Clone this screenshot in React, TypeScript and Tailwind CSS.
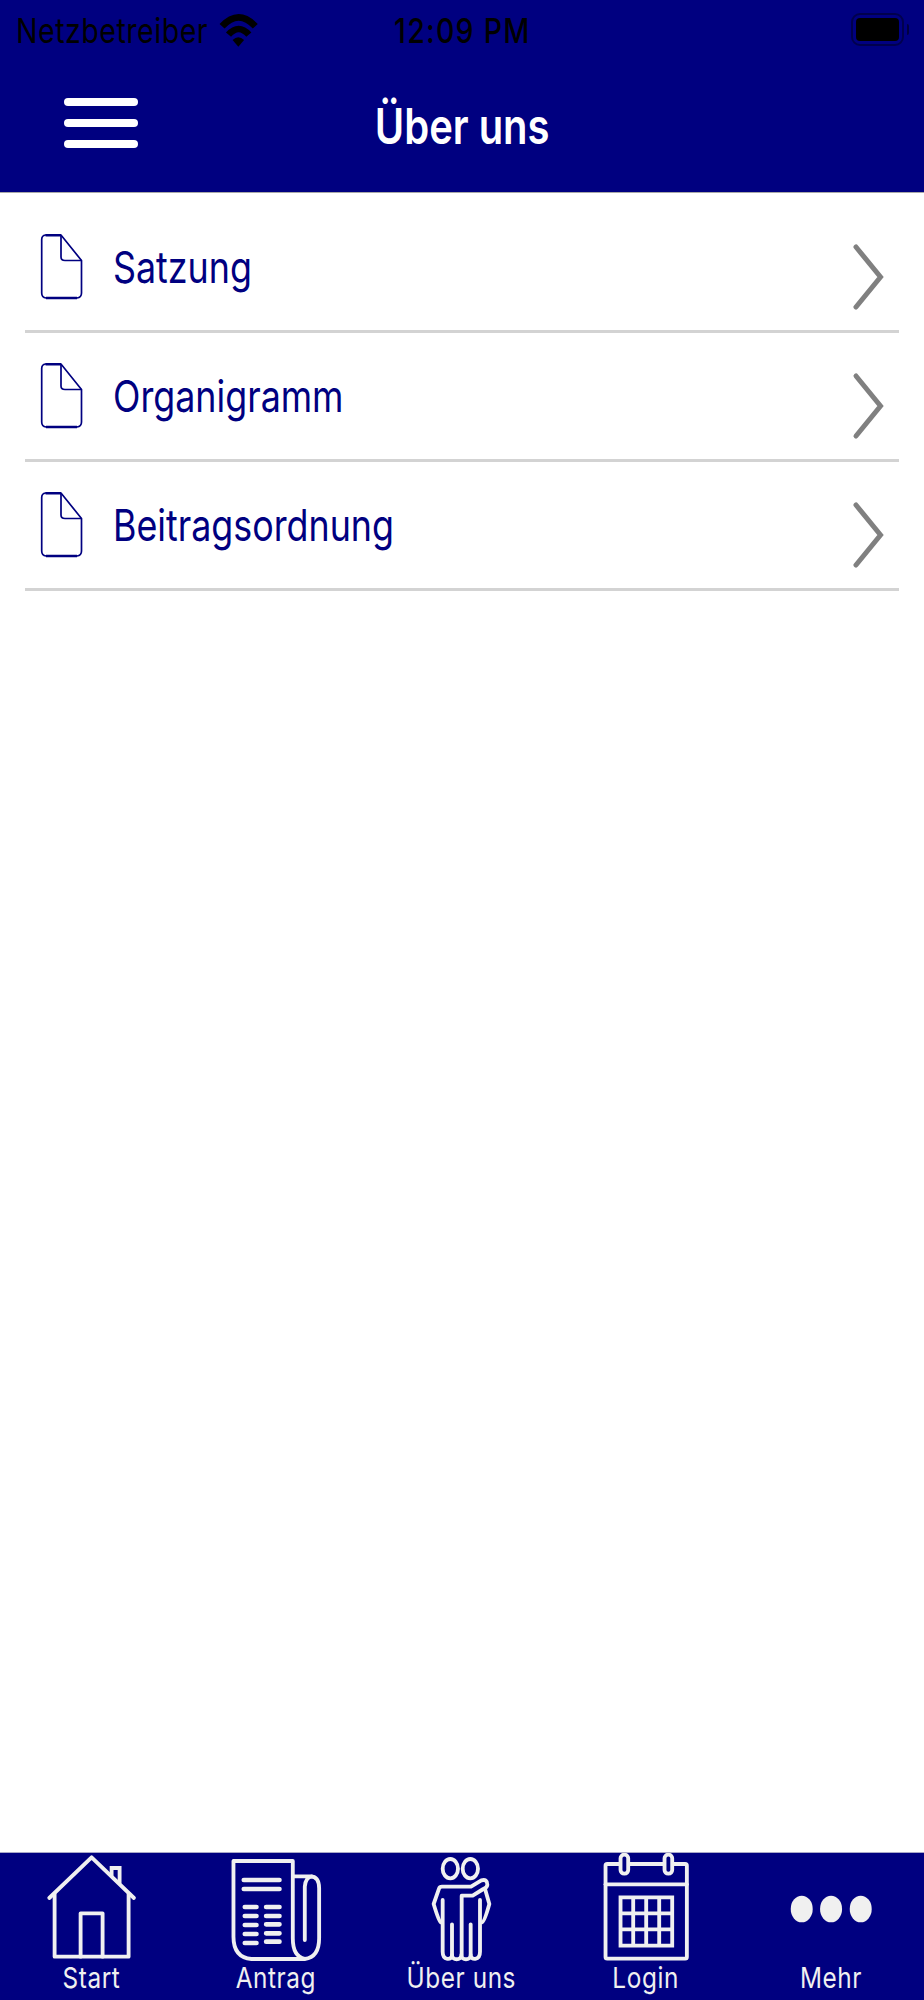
import type { ReactNode } from 'react'

const documents = ['Satzung', 'Organigramm', 'Beitragsordnung']

const tabs: { label: string; viewBox: string; icon: ReactNode }[] = [
  {
    label: 'Start',
    viewBox: '133.2 39 288 336',
    icon: (
      <>
        <path d="M149 174 276 52 403 174" />
        <path d="M165 162V350H387V162" />
        <path d="M243 350V220H309V350" />
        <path strokeLinejoin="miter" d="M336 106V84H360V128" />
      </>
    ),
  },
  {
    label: 'Antrag',
    viewBox: '117.6 39 288 336',
    icon: (
      <>
        <path d="M345 357H185Q131 352 131 290V63H309V295Q309 350 345 357Q388 352 388 295V145Q388 109 362 109H309" />
        <path d="M345 300V140Q347 112 366 109" />
        <path
          strokeWidth="14"
          d="M162 120H269M162 147H269M165 201H200M165 228H200M165 255H200M165 282H200M165 309H200M229 201H269M229 228H269M229 253H269M229 280H269M229 305H269"
        />
      </>
    ),
  },
  {
    label: 'Über uns',
    viewBox: '102 39 288 336',
    icon: (
      <>
        <ellipse cx="211" cy="86" rx="23" ry="29" />
        <ellipse cx="271" cy="86" rx="23" ry="29" />
        <path d="M182 247Q177 246 161 192L177 146Q179 140 186 140H273L304 121Q322 116 322 134Q322 142 310 147L278 167H245V345" />
        <path d="M316 150 328 192Q313 246 306 247" />
        <path d="M188 180V335C188 362 216 362 216 345C216 362 244 362 244 345C244 362 272 362 272 345C272 362 300 362 300 335V180" />
        <path d="M216 253V345M272 253V345" />
      </>
    ),
  },
  {
    label: 'Login',
    viewBox: '116.4 39 288 336',
    icon: (
      <>
        <rect x="136" y="72" width="244" height="284" rx="5" />
        <path d="M136 133H380" />
        <rect x="181" y="44" width="23" height="57" rx="11" fill="#000080" />
        <rect x="313" y="44" width="23" height="57" rx="11" fill="#000080" />
        <path strokeLinejoin="miter" d="M181 172H336V317H181ZM219 172V317M258 172V317M297 172V317M181 220H336M181 268H336" />
      </>
    ),
  },
  {
    label: 'Mehr',
    viewBox: '130.8 39 288 336',
    icon: (
      <g fill="#f0f0f0" stroke="none">
        <ellipse cx="184" cy="207" rx="33" ry="40" />
        <ellipse cx="272" cy="207" rx="33" ry="40" />
        <ellipse cx="361" cy="207" rx="33" ry="40" />
      </g>
    ),
  },
]

function StatusBar() {
  return (
    <div className="grid h-[62px] grid-cols-3 text-[34px] leading-[62px] text-black">
      <div className="flex pl-4">
        <span className="w-[203px] shrink-0 whitespace-nowrap">
          <span className="inline-block origin-left scale-x-[0.84] tracking-[0.6px]">Netzbetreiber</span>
        </span>
        <svg
          className="mt-[13px] h-[35px] w-[39px] shrink-0"
          viewBox="658 39 115 105"
          preserveAspectRatio="none"
          fill="none"
          stroke="black"
        >
          <path strokeWidth="20" d="M667 79Q716 25 765 79" />
          <path strokeWidth="20" d="M686 104Q716 70 746 104" />
          <path d="M715 140 698 120Q715 103 732 120Z" fill="black" stroke="none" />
        </svg>
      </div>
      <div className="text-center font-medium">
        <span className="inline-block scale-x-[0.84] tracking-[1.5px] whitespace-nowrap">12:09 PM</span>
      </div>
      <div className="flex justify-end pt-[13px] pr-[15px]">
        <div className="h-[33px] w-[53px] rounded-[9px] border-2 border-black/40 p-[3px]">
          <div className="h-[23px] w-full rounded-[4px] bg-black" />
        </div>
        <div className="mt-[11px] ml-[3px] h-[11px] w-[2px] rounded-r-full bg-black/50" />
      </div>
    </div>
  )
}

function Header() {
  return (
    <div className="grid h-[130px] grid-cols-3">
      <div className="flex flex-col gap-[13px] pt-9 pl-16">
        <div className="h-2 w-[74px] rounded-full bg-white" />
        <div className="h-2 w-[74px] rounded-full bg-white" />
        <div className="h-2 w-[74px] rounded-full bg-white" />
      </div>
      <h1 className="text-center text-[49px] leading-[130px] font-semibold text-white">
        <span className="inline-block scale-x-[0.815] whitespace-nowrap">Über uns</span>
      </h1>
    </div>
  )
}

function DocumentRow({ title }: { title: string }) {
  return (
    <li className="flex h-[129px] border-b-3 border-[#d3d3d3]">
      <svg className="mt-[28px] ml-[15px] h-[68px] w-[44px]" viewBox="0 0 44 68" fill="none" stroke="#000080" strokeWidth="1.7">
        <path d="M21 3H5.500Q1.700 3.500 1.700 7.500V61Q1.700 65.500 6 66H37Q41.500 65.500 41.500 61V28.500Z" />
        <path d="M21 3V25Q21 28.500 25 28.500H41.500" />
        <path strokeWidth="2.400" d="M5.500 3.200H21M6 66H37" />
      </svg>
      <span className="ml-[29px] flex-1 text-[44px] leading-[127px] text-[#000080]">
        <span className="inline-block origin-left scale-x-[0.814] whitespace-nowrap">{title}</span>
      </span>
      <svg className="mt-[37px] mr-[14px] h-[72px] w-[34px]" viewBox="0 0 34 72" fill="none" stroke="#808080" strokeWidth="5" strokeLinecap="round">
        <path d="M5 6 29.500 36 5 66" />
      </svg>
    </li>
  )
}

function TabBar() {
  return (
    <nav className="grid h-[148px] grid-cols-5 border-t border-[#a8a8c8] bg-[#000080]">
      {tabs.map((tab) => (
        <div key={tab.label} className="flex flex-col items-center">
          <svg
            className="h-[112px] w-24 shrink-0"
            viewBox={tab.viewBox}
            fill="none"
            stroke="#f0f0f0"
            strokeWidth="11.5"
            strokeLinecap="round"
            strokeLinejoin="round"
          >
            {tab.icon}
          </svg>
          <span className="-ml-0.5 scale-x-[0.84] text-[29px] leading-[26px] tracking-[0.7px] whitespace-nowrap text-[#f0f0f0]">
            {tab.label}
          </span>
        </div>
      ))}
    </nav>
  )
}

export default function App() {
  return (
    <div className="flex h-[2000px] w-[924px] flex-col overflow-hidden bg-white font-['Inter',sans-serif]">
      <header className="h-[193px] border-b border-[#a8a8a8] bg-[#000080]">
        <StatusBar />
        <Header />
      </header>
      <main className="flex-1 px-[25px] pt-[11px]">
        <ul>
          {documents.map((title) => (
            <DocumentRow key={title} title={title} />
          ))}
        </ul>
      </main>
      <TabBar />
    </div>
  )
}
